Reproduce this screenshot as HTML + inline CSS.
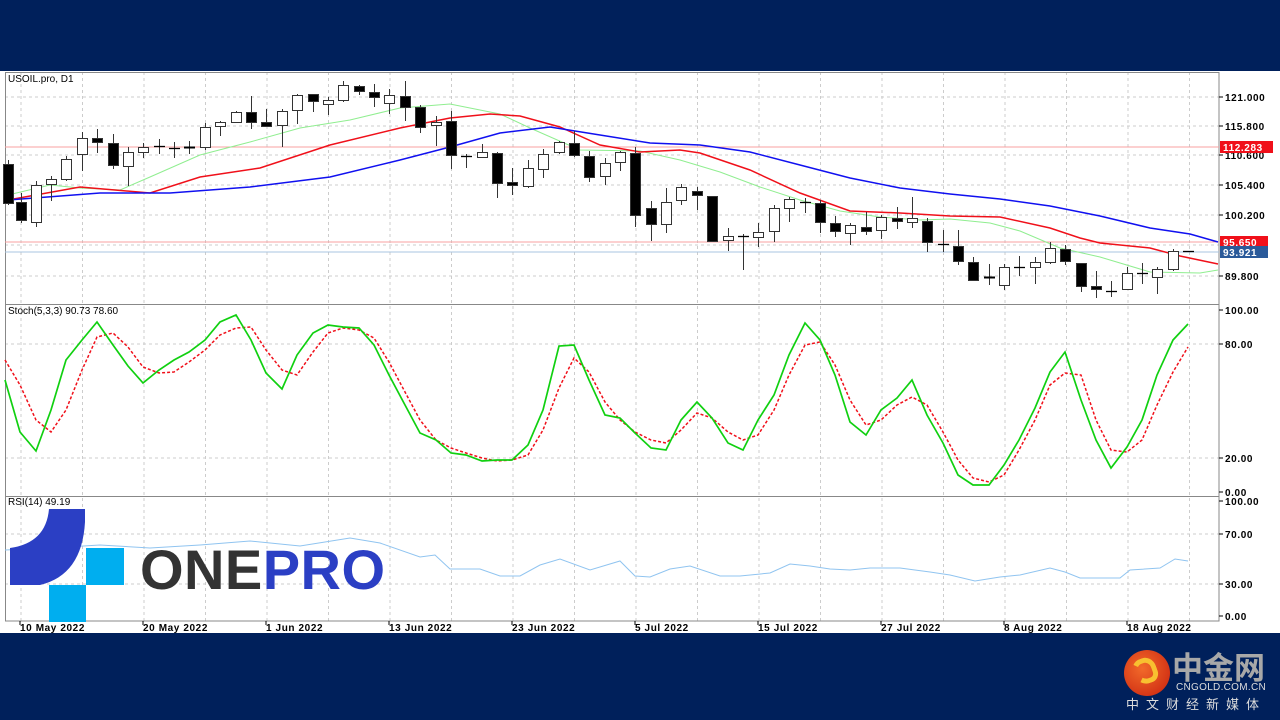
<!DOCTYPE html>
<html><head><meta charset="utf-8"><style>
html,body{margin:0;padding:0;width:1280px;height:720px;overflow:hidden;background:#fff}
.bar{position:absolute;left:0;width:1280px;background:#00205b}
svg text{font-family:"Liberation Sans",sans-serif}
</style></head><body>
<div class="bar" style="top:0;height:71px"></div>
<div class="bar" style="top:633px;height:87px"></div>
<svg id="c" width="1280" height="720" style="position:absolute;left:0;top:0"></svg>
<div style="position:absolute;left:1124px;top:650px;width:46px;height:46px;border-radius:50%;background:radial-gradient(circle at 40% 40%,#f26a2a,#c8200e)"></div>
<div style="position:absolute;left:1133px;top:658px;width:24px;height:26px;border-radius:50% 50% 40% 60%;border:5px solid #f8c030;border-left-color:transparent;box-sizing:border-box;transform:rotate(-20deg)"></div>
<div style="position:absolute;left:1172px;top:647px;font:bold 31px 'Noto Sans CJK SC',sans-serif;color:#a8a8a8;line-height:38px;white-space:nowrap">中金网</div>
<div style="position:absolute;left:1176px;top:682px;font:10px 'Liberation Sans',sans-serif;color:#ddd;letter-spacing:0.3px;white-space:nowrap">CNGOLD.COM.CN</div>
<div style="position:absolute;left:1126px;top:694px;font:13px 'Noto Sans CJK SC',sans-serif;color:#ddd;letter-spacing:7px;white-space:nowrap">中文财经新媒体</div>
<script>
const s=document.getElementById('c');let h='';
const L=(x1,y1,x2,y2,c,w,d)=>h+=`<line x1="${x1}" y1="${y1}" x2="${x2}" y2="${y2}" stroke="${c}" stroke-width="${w||1}" ${d?`stroke-dasharray="${d}"`:''}/>`;
const T=(x,y,t,o)=>h+=`<text x="${x}" y="${y}" ${o||'font-size="10" fill="#000"'}>${t}</text>`;
const P=(pts,c,w,d)=>h+=`<polyline fill="none" points="${pts.map(p=>p.join(',')).join(' ')}" stroke="${c}" stroke-width="${w}" ${d?`stroke-dasharray="${d}"`:''}/>`;
for(let x=21;x<1219;x+=61.5)L(x,72,x,621,'#ccc',1,'3,3');
[97,126,155,185,215,245,276].forEach(y=>L(5,y,1219,y,'#ccc',1,'3,3'));
[344,458].forEach(y=>L(5,y,1219,y,'#ccc',1,'3,3'));
[534,584].forEach(y=>L(5,y,1219,y,'#ccc',1,'3,3'));
h+=`<rect x="5.5" y="72.5" width="1213.5" height="548.5" fill="none" stroke="#888"/>`;
L(5,304.5,1219,304.5,'#888');L(5,496.5,1219,496.5,'#888');
[[97,'121.000'],[126,'115.800'],[155,'110.600'],[185,'105.400'],[215,'100.200'],[276,'89.800'],[310,'100.00'],[344,'80.00'],[458,'20.00'],[492,'0.00'],[501,'100.00'],[534,'70.00'],[584,'30.00'],[616,'0.00']].forEach(a=>{L(1219,a[0],1223,a[0],'#000');T(1225,a[0]+4,a[1],'font-size="10" font-weight="bold" fill="#000" letter-spacing="0.6"')});
L(5,147,1219,147,'#f8a0a0');L(5,242,1219,242,'#f8a0a0');L(5,252,1219,252,'#a8c4e0');
h+=`<rect x="1220" y="141" width="53" height="12" fill="#f0101a"/><rect x="1220" y="236" width="48" height="12" fill="#f0101a"/><rect x="1220" y="246" width="48" height="12" fill="#2a5a9a"/>`;
T(1223,151,'112.283','font-size="10" font-weight="bold" fill="#fff" letter-spacing="0.6"');T(1223,246,'95.650','font-size="10" font-weight="bold" fill="#fff" letter-spacing="0.6"');T(1223,256,'93.921','font-size="10" font-weight="bold" fill="#fff" letter-spacing="0.6"');
P([[8,195],[50,185],[80,188],[120,190],[150,177],[200,155],[250,142],[300,128],[350,120],[400,108],[450,104],[500,114],[530,128],[580,150],[640,151],[680,160],[720,172],[760,187],[800,200],[840,211],[880,217],[920,220],[950,219],[990,223],[1020,231],[1060,248],[1100,257],[1150,272],[1200,273],[1218,270]],'#90ee90',1);
P([[8,200],[80,187],[150,193],[200,177],[260,168],[330,145],[400,128],[450,118],[490,114],[520,116],[560,127],[600,145],[640,152],[680,150],[700,153],[750,170],[800,193],[850,211],[900,213],[950,216],[1000,217],[1050,228],[1080,238],[1100,243],[1150,248],[1180,256],[1218,264]],'#f0101a',1.5);
P([[8,200],[100,193],[170,193],[250,187],[330,177],[400,160],[450,147],[500,133],[550,127],[600,135],[650,143],[700,145],[750,152],[800,165],[850,178],[900,188],[950,194],[1000,199],[1050,206],[1100,216],[1150,228],[1190,234],[1218,242]],'#1010f0',1.5);
const C=[[8,160,164,203,205,1],[21,193,202,220,223,1],[36,181,185,222,227,0],[51,176,179,184,201,0],[66,156,159,179,181,0],[82,132,138,154,171,0],[97,129,138,142,153,1],[113,134,143,165,169,1],[128,147,152,166,186,0],[143,143,147,152,158,0],[159,139,146,146,154,1],[174,142,148,148,158,0],[189,141,147,149,154,0],[205,123,127,147,150,0],[220,121,122,126,136,0],[236,111,112,122,123,0],[251,96,112,122,129,1],[266,109,122,126,126,1],[282,109,111,125,147,0],[297,94,95,110,124,0],[313,94,94,101,112,1],[328,97,100,104,115,0],[343,81,85,100,102,0],[359,85,86,91,95,1],[374,84,92,97,107,1],[389,89,95,103,114,0],[405,81,96,107,121,1],[420,105,107,127,133,1],[436,116,122,125,146,0],[451,111,121,155,169,1],[466,154,156,156,168,1],[482,144,152,157,158,0],[497,152,153,183,198,1],[512,168,182,185,195,1],[528,160,168,186,188,0],[543,149,154,169,178,0],[559,141,142,152,154,0],[574,131,143,155,157,1],[589,151,156,177,182,1],[605,158,163,176,185,0],[620,151,152,162,171,0],[635,147,153,215,227,1],[651,201,208,224,241,1],[666,188,202,224,233,0],[681,184,187,200,205,0],[697,187,191,195,210,1],[712,196,196,241,242,1],[728,228,236,240,251,0],[743,234,236,236,270,1],[758,223,232,237,247,0],[774,205,208,231,242,0],[789,197,199,208,222,0],[805,198,202,202,213,1],[820,200,203,222,233,1],[835,216,223,231,237,1],[850,223,225,233,245,0],[866,212,227,231,235,1],[881,215,217,230,239,0],[897,207,218,221,229,1],[912,197,218,222,228,0],[927,218,221,242,252,1],[943,230,244,244,252,1],[958,230,246,261,265,1],[973,257,262,280,281,1],[989,264,277,279,285,0],[1004,264,267,285,290,0],[1019,256,267,267,276,1],[1035,257,262,267,284,0],[1050,242,248,262,264,0],[1065,245,249,261,265,1],[1081,263,263,286,292,1],[1096,271,286,289,298,1],[1111,281,291,291,297,1],[1127,267,273,289,290,0],[1142,263,273,274,284,1],[1157,267,269,277,294,0],[1173,249,251,269,271,0],[1188,251,251,251,252,1]];
C.forEach(k=>{const[x,hi,o,c,lo,f]=k;L(x+.5,hi,x+.5,lo,'#333');const bh=Math.max(c-o,1);if(bh<=2)L(x-5,o+.5,x+6,o+.5,'#000',bh>1?2:1.3);else h+=`<rect x="${x-4.5}" y="${o+.5}" width="10" height="${bh}" fill="${f?'#000':'#fff'}" stroke="#333"/>`;});
const G=[[5,380],[20,432],[36,451],[51,410],[66,360],[82,340],[97,322],[113,345],[128,366],[143,383],[159,370],[174,360],[189,352],[205,340],[220,322],[236,315],[251,340],[266,373],[282,389],[297,355],[313,333],[328,325],[343,327],[359,328],[374,345],[389,375],[405,405],[420,433],[436,440],[451,453],[466,455],[482,461],[497,460],[512,460],[528,445],[543,410],[559,346],[574,345],[589,380],[605,415],[620,418],[635,433],[651,448],[666,450],[681,420],[697,402],[712,418],[728,443],[743,450],[758,420],[774,395],[789,355],[805,323],[820,340],[835,375],[850,422],[866,435],[881,410],[897,398],[912,380],[927,415],[943,443],[958,475],[973,485],[989,485],[1004,465],[1019,440],[1035,408],[1050,372],[1065,352],[1081,400],[1096,440],[1111,468],[1127,447],[1142,420],[1157,375],[1173,340],[1188,324]];
const R=[[5,360],[20,385],[36,420],[51,432],[66,410],[82,370],[97,337],[113,333],[128,347],[143,367],[159,373],[174,372],[189,362],[205,350],[220,335],[236,328],[251,327],[266,350],[282,370],[297,375],[313,352],[328,333],[343,328],[359,330],[374,338],[389,362],[405,392],[420,420],[436,440],[451,448],[466,453],[482,458],[497,461],[512,460],[528,455],[543,430],[559,388],[574,358],[589,372],[605,402],[620,420],[635,432],[651,440],[666,443],[681,430],[697,413],[712,418],[728,432],[743,440],[758,435],[774,410],[789,375],[805,345],[820,342],[835,365],[850,400],[866,425],[881,420],[897,405],[912,397],[927,405],[943,432],[958,460],[973,478],[989,482],[1004,475],[1019,450],[1035,420],[1050,385],[1065,373],[1081,375],[1096,420],[1111,450],[1127,452],[1142,440],[1157,405],[1173,372],[1188,347]];
P(R,'#f0101a',1.5,'3,2');P(G,'#10d010',1.7);
P([[5,550],[50,548],[100,545],[150,548],[200,545],[250,541],[300,546],[350,538],[380,543],[420,557],[435,555],[450,569],[480,569],[500,576],[520,576],[540,565],[560,559],[590,570],[620,561],[635,576],[650,577],[670,569],[690,566],[720,576],[740,576],[770,573],[790,564],[810,566],[830,569],[850,570],[870,568],[900,568],[930,572],[950,575],[975,581],[1000,577],[1020,575],[1050,568],[1065,572],[1080,578],[1120,578],[1130,570],[1160,568],[1175,559],[1188,561]],'#90c4f0',1);
T(8,82,'USOIL.pro, D1');T(8,314,'Stoch(5,3,3) 90.73 78.60');T(8,505,'RSI(14) 49.19');
[[20,'10 May 2022'],[143,'20 May 2022'],[266,'1 Jun 2022'],[389,'13 Jun 2022'],[512,'23 Jun 2022'],[635,'5 Jul 2022'],[758,'15 Jul 2022'],[881,'27 Jul 2022'],[1004,'8 Aug 2022'],[1127,'18 Aug 2022']].forEach(a=>{L(a[0],621,a[0],625,'#000');T(a[0],631,a[1],'font-size="10" font-weight="bold" fill="#000" letter-spacing="0.6"')});
h+=`<path d="M49,509 L85,509 L85,522 Q82,575 40,585 L10,585 L10,548 Q46,543 49,509 Z" fill="#2b3fc4"/>`;
h+=`<rect x="86" y="548" width="38" height="37" fill="#00aeef"/><rect x="49" y="585" width="37" height="37" fill="#00aeef"/>`;
h+=`<text x="140" y="589" font-size="56" font-weight="bold" fill="#333" textLength="245" lengthAdjust="spacing">ONE<tspan fill="#2b3fc4">PRO</tspan></text>`;
s.innerHTML=h;
</script>
</body></html>
